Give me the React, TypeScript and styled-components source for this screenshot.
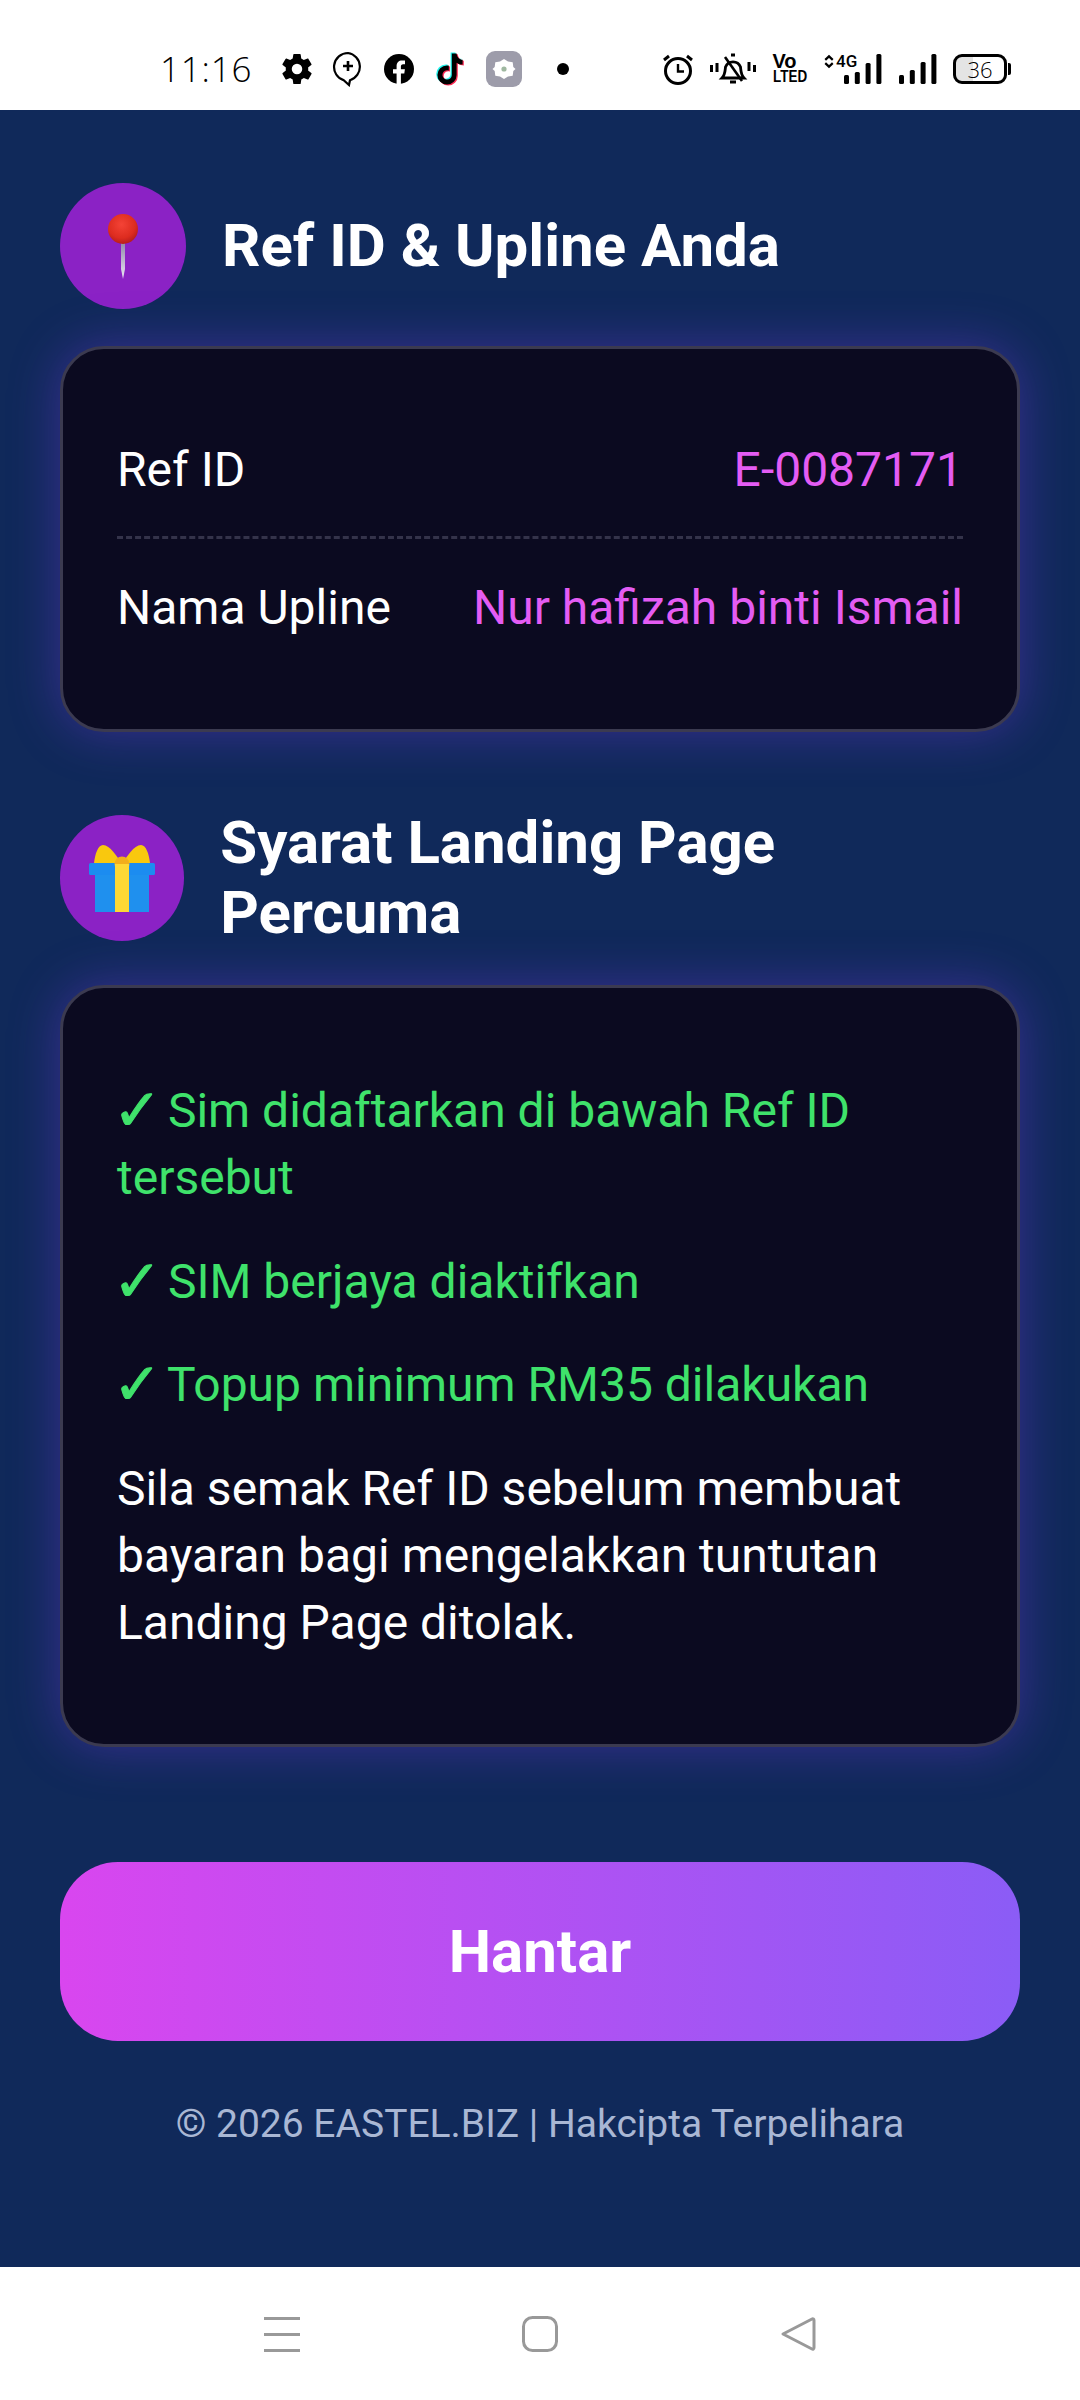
import React, { FC } from 'react';
import styled, { createGlobalStyle } from 'styled-components';

const GlobalStyle = createGlobalStyle`
  html, body {
    margin: 0;
    padding: 0;
    background: #fff;
  }
  * {
    box-sizing: border-box;
  }
`;

const GearIcon: FC = () => (
  <svg width="30" height="30" viewBox="2 2 20 20">
    <path
      fill="#000"
      d="M19.4 13c.04-.32.1-.66.1-1s-.06-.68-.1-1l2.1-1.65c.2-.15.25-.42.12-.64l-2-3.46c-.12-.22-.39-.3-.61-.22l-2.49 1c-.52-.4-1.08-.73-1.69-.98l-.38-2.65A.49.49 0 0 0 14 2h-4c-.25 0-.46.18-.49.42l-.38 2.65c-.61.25-1.17.59-1.69.98l-2.49-1a.5.5 0 0 0-.61.22l-2 3.46c-.13.22-.07.49.12.64L4.57 11c-.04.32-.07.66-.07 1s.03.68.07 1l-2.11 1.65c-.19.15-.25.42-.12.64l2 3.46c.12.22.39.3.61.22l2.49-1c.52.4 1.08.73 1.69.98l.38 2.65c.03.24.24.42.49.42h4c.25 0 .46-.18.49-.42l.38-2.65c.61-.25 1.17-.59 1.69-.98l2.49 1c.22.08.49 0 .61-.22l2-3.46c.12-.22.07-.49-.12-.64L19.4 13ZM12 15.5a3.5 3.5 0 1 1 0-7 3.5 3.5 0 0 1 0 7Z"
    />
  </svg>
);

const ChatPlusIcon: FC = () => (
  <svg width="32" height="36" viewBox="0 0 32 36" fill="none" stroke="#000">
    <path strokeWidth="2.2" d="M16 2a14 14 0 0 0-4 27.4l5 4.6 1-4.8A14 14 0 0 0 16 2Z" />
    <path strokeWidth="2.6" d="M16 10v10M11 15h10" />
  </svg>
);

const FacebookIcon: FC = () => (
  <svg width="30" height="30" viewBox="0 0 30 30">
    <circle cx="15" cy="15" r="15" fill="#000" />
    <path fill="#fff" d="M12.6 30V19.4H9v-4.2h3.6V12c0-3.6 2.2-5.6 5.4-5.6 1.6 0 3 .2 3 .2v3.6h-1.8c-1.8 0-2.3 1.1-2.3 2.2v2.8h4l-.6 4.2h-3.4V30Z" />
  </svg>
);

const TiktokIcon: FC = () => {
  const d = 'M17 3h4c.3 3 2.2 5 5 5.3v4c-2 0-3.700-.6-5-1.600V21a8 8 0 1 1-8-8c.5 0 1 0 1.500.1v4.200A3.900 3.900 0 1 0 17 21Z';
  return (
    <svg width="32" height="36" viewBox="3 1 25 30">
      <path fill="#25f4ee" d={d} transform="translate(-1 -.8)" />
      <path fill="#fe2c55" d={d} transform="translate(1 .8)" />
      <path fill="#000" d={d} />
    </svg>
  );
};

const SettingsBadge: FC = () => (
  <svg width="36" height="36" viewBox="0 0 36 36">
    <rect width="36" height="36" rx="9" fill="#9d9caa" />
    <path fill="#fff" d="M18 8l4 2.600 4.700.600.600 4.700L29.500 18l-2.200 2.100-.6 4.700-4.700.6L18 28l-4-2.600-4.700-.6-.6-4.700L6.500 18l2.200-2.100.6-4.700 4.700-.6Z" />
    <circle cx="18" cy="18" r="2.600" fill="#9fb8a0" />
  </svg>
);

const AlarmIcon: FC = () => (
  <svg width="32" height="32" viewBox="0 0 32 32" fill="none" stroke="#000">
    <circle cx="16" cy="18" r="12.500" strokeWidth="3" />
    <path strokeWidth="2.400" d="M16 11v7.500h6" />
    <path strokeWidth="3" d="M2 7l5-4M30 7l-5-4" />
  </svg>
);

const MutedBellIcon: FC = () => (
  <svg width="46" height="32" viewBox="0 0 46 32" fill="none" stroke="#000">
    <path strokeWidth="2.800" d="M12 25h22c-3-3-3-6-3.500-11a8 8 0 0 0-15 0C15 19 15 22 12 25Z" />
    <path strokeWidth="2.600" d="M15 4l17 24" />
    <path strokeWidth="3" d="M1.500 12v7M7 10v9M39 9v9M44.500 12v7" />
    <path strokeWidth="3" d="M20 29h6M21 2h4" />
  </svg>
);

const Bars: FC<{ heights: number[] }> = ({ heights }) => (
  <svg width="38" height="30" viewBox="0 0 38 30" fill="#000">
    {heights.map((h, i) => (
      <rect key={i} x={i * 10.800} y={30 - h} width="5" height={h} rx="1.500" />
    ))}
  </svg>
);

const ArrowsIcon: FC = () => (
  <svg width="10" height="15" viewBox="0 0 12 16" fill="none" stroke="#000" strokeWidth="2.600">
    <path d="M1.500 6L6 1.800 10.500 6M1.500 10L6 14.200 10.500 10" />
  </svg>
);

const PinIcon: FC = () => (
  <svg width="32" height="66" viewBox="0 0 32 66">
    <defs>
      <linearGradient id="pinNeedle" x1="0" y1="0" x2="0" y2="1">
        <stop offset="0" stopColor="#8d84a8" />
        <stop offset="1" stopColor="#ece6f4" />
      </linearGradient>
      <radialGradient id="pinHead" cx="0.45" cy="0.35" r="0.65">
        <stop offset="0" stopColor="#f44336" />
        <stop offset="0.7" stopColor="#dd2c1f" />
        <stop offset="1" stopColor="#b71c1c" />
      </radialGradient>
    </defs>
    <path fill="url(#pinNeedle)" d="M14 28h4v28l-2 10-2-10Z" />
    <circle cx="16" cy="16" r="15" fill="url(#pinHead)" />
  </svg>
);

const GiftIcon: FC = () => (
  <svg width="66" height="67" viewBox="0 0 66 67">
    <path fill="#f9c80e" d="M33 18C28 12 21 0 14 0 9 0 6 9 5 18Z" />
    <path fill="#f9c80e" d="M33 18C38 12 45 0 52 0c5 0 8 9 9 18Z" />
    <rect x="6" y="26" width="54" height="41" fill="#1f90ee" />
    <rect x="0" y="18" width="66" height="12" rx="1.500" fill="#1c8cf0" />
    <circle cx="33" cy="19" r="7.500" fill="#f2ae1c" />
    <rect x="26" y="19" width="14" height="48" fill="#fdd835" />
  </svg>
);

const MenuIcon: FC = () => (
  <svg width="36" height="38" viewBox="0 0 36 38" stroke="#999" strokeWidth="3">
    <path d="M0 3.500h36M0 19.500h36M0 35.500h36" />
  </svg>
);

const HomeIcon: FC = () => (
  <svg width="36" height="38" viewBox="0 0 36 38" fill="none" stroke="#999" strokeWidth="3">
    <rect x="1.500" y="2.500" width="33" height="33" rx="9" />
  </svg>
);

const BackIcon: FC = () => (
  <svg width="36" height="38" viewBox="0 0 36 38" fill="none" stroke="#999" strokeWidth="3" strokeLinejoin="round">
    <path d="M32 4 3 19l29 15c1 .5 2-.2 2-1.500V5.500C34 4.200 33 3.500 32 4Z" />
  </svg>
);

const conditions = ['Sim didaftarkan di bawah Ref ID tersebut', 'SIM berjaya diaktifkan', 'Topup minimum RM35 dilakukan'];

const App: FC = () => {
  return (
    <Screen>
      <GlobalStyle />
      <StatusBar>
        <Clock>11:16</Clock>
        <NotifyIcons>
          <GearIcon />
          <ChatPlusIcon />
          <FacebookIcon />
          <TiktokIcon />
          <SettingsBadge />
          <Dot />
        </NotifyIcons>
        <SystemIcons>
          <AlarmIcon />
          <MutedBellIcon />
          <Volte>
            <span>Vo</span>
            <span>LTED</span>
          </Volte>
          <Signal>
            <SignalLabel>
              <ArrowsIcon />
              4G
            </SignalLabel>
            <Bars heights={[9, 12, 21, 30]} />
          </Signal>
          <Bars heights={[9, 14, 22, 30]} />
          <Battery>
            <BatteryBody>36</BatteryBody>
            <BatteryCap />
          </Battery>
        </SystemIcons>
      </StatusBar>

      <Main>
        <Section>
          <SectionHeader>
            <IconCircle>
              <PinIcon />
            </IconCircle>
            <SectionTitle>Ref ID &amp; Upline Anda</SectionTitle>
          </SectionHeader>
          <Card>
            <InfoRow>
              <InfoLabel>Ref ID</InfoLabel>
              <InfoValue>E-0087171</InfoValue>
            </InfoRow>
            <InfoRow $last>
              <InfoLabel>Nama Upline</InfoLabel>
              <InfoValue>Nur hafizah binti Ismail</InfoValue>
            </InfoRow>
          </Card>
        </Section>

        <Section>
          <SectionHeader>
            <IconCircle>
              <GiftIcon />
            </IconCircle>
            <SectionTitle>Syarat Landing Page Percuma</SectionTitle>
          </SectionHeader>
          <TermsCard>
            {conditions.map((text) => (
              <Condition key={text}>
                <CheckMark>✓</CheckMark> {text}
              </Condition>
            ))}
            <Note>Sila semak Ref ID sebelum membuat bayaran bagi mengelakkan tuntutan Landing Page ditolak.</Note>
          </TermsCard>
        </Section>

        <SubmitButton type="button">Hantar</SubmitButton>
        <Copyright>© 2026 EASTEL.BIZ | Hakcipta Terpelihara</Copyright>
      </Main>

      <NavBar>
        <MenuIcon />
        <HomeIcon />
        <BackIcon />
      </NavBar>
    </Screen>
  );
};

const Screen = styled.div`
  width: 1080px;
  height: 2400px;
  display: flex;
  flex-direction: column;
  overflow: hidden;
  font-family: Roboto, 'Liberation Sans', sans-serif;
`;
const StatusBar = styled.header`
  height: 110px;
  flex: none;
  background: #fff;
  display: flex;
  align-items: center;
  padding: 28px 69px 0 160px;
  color: #000;
`;
const Clock = styled.span`
  font-family: 'Open Sans', sans-serif;
  font-size: 35px;
  font-weight: 300;
  letter-spacing: 0.800px;
  line-height: 40px;
  width: 122px;
`;
const NotifyIcons = styled.div`
  display: flex;
  align-items: center;
  gap: 20px;
`;
const Dot = styled.span`
  width: 12px;
  height: 12px;
  border-radius: 50%;
  background: #000;
  margin-left: 15px;
`;
const SystemIcons = styled.div`
  display: flex;
  align-items: center;
  gap: 16.500px;
  margin-left: auto;
`;
const Volte = styled.div`
  width: 35px;
  display: flex;
  flex-direction: column;
  font-family: 'Liberation Sans', sans-serif;
  font-weight: 700;
  line-height: 15px;
  span:first-child {
    font-size: 20px;
  }
  span:last-child {
    font-size: 16px;
    white-space: nowrap;
    transform: scaleX(0.84);
    transform-origin: left;
  }
`;
const Signal = styled.div`
  width: 58px;
  display: flex;
  justify-content: flex-end;
  position: relative;
`;
const SignalLabel = styled.span`
  position: absolute;
  left: 0;
  top: -1px;
  display: flex;
  align-items: center;
  gap: 2px;
  font-size: 17px;
  font-weight: 500;
  line-height: 16px;
`;
const Battery = styled.div`
  display: flex;
  align-items: center;
  gap: 1px;
`;
const BatteryBody = styled.div`
  width: 54px;
  height: 30px;
  border: 3px solid #000;
  border-radius: 9px;
  display: flex;
  align-items: center;
  justify-content: center;
  font-family: 'Open Sans', sans-serif;
  font-size: 22px;
  font-weight: 300;
  background: linear-gradient(to right, #e4e4e4 36%, #fff 36%);
`;
const BatteryCap = styled.span`
  width: 3px;
  height: 12px;
  background: #000;
  border-radius: 0 2px 2px 0;
`;
const Main = styled.main`
  flex: 1;
  background: #10295a;
  padding: 73px 60px 0;
  display: flex;
  flex-direction: column;
`;
const Section = styled.section`
  display: flex;
  flex-direction: column;
  margin-bottom: 76px;
`;
const SectionHeader = styled.div`
  display: flex;
  align-items: center;
  gap: 36px;
  margin-bottom: 37px;
`;
const IconCircle = styled.div`
  width: 126px;
  height: 126px;
  border-radius: 50%;
  background: #8b22c5;
  display: flex;
  align-items: center;
  justify-content: center;
`;
const SectionTitle = styled.h2`
  margin: 0;
  color: #fff;
  font-size: 60px;
  font-weight: 700;
  line-height: 70px;
`;
const Card = styled.div`
  background: #0b0a20;
  border: 3px solid #3b3a50;
  border-radius: 44px;
  padding: 51px 54px 52px;
  box-shadow: 0 0 50px rgba(124, 58, 237, 0.38);
`;
const TermsCard = styled(Card)`
  padding: 89px 54px 88px;
`;
const InfoRow = styled.div<{ $last?: boolean }>`
  display: flex;
  align-items: center;
  justify-content: space-between;
  padding: 36px 0 33px;
  border-bottom: ${(p) => (p.$last ? 'none' : '3px dashed #34334a')};
  & + & {
    padding: 35px 0 36px;
  }
`;
const InfoLabel = styled.span`
  color: #fff;
  font-size: 48px;
  line-height: 67px;
`;
const InfoValue = styled.span`
  color: #e45cf3;
  font-size: 48px;
  line-height: 67px;
`;
const Condition = styled.p`
  margin: 0 0 36.500px;
  color: #3fe26b;
  font-size: 48px;
  line-height: 67px;
`;
const CheckMark = styled.span`
  display: inline-block;
  width: 39px;
  line-height: 0;
  font-family: 'DejaVu Sans', sans-serif;
  font-size: 58px;
  -webkit-text-stroke: 1px #3fe26b;
  text-indent: -4px;
  vertical-align: -3px;
`;
const Note = styled.p`
  margin: 0;
  color: #fff;
  font-size: 48px;
  line-height: 67px;
`;
const SubmitButton = styled.button`
  height: 179px;
  width: 100%;
  flex: none;
  border: none;
  border-radius: 58px;
  background: linear-gradient(90deg, #d946ef, #8b5cf6);
  color: #fff;
  font-family: inherit;
  font-size: 60px;
  font-weight: 700;
  margin-top: 39px;
`;
const Copyright = styled.p`
  margin: 60px 0 0;
  text-align: center;
  color: #a9b7d4;
  font-size: 39px;
  line-height: 46px;
`;
const NavBar = styled.nav`
  height: 133px;
  flex: none;
  background: #fff;
  display: flex;
  align-items: center;
  gap: 222px;
  padding-left: 264px;
`;

export default App;
